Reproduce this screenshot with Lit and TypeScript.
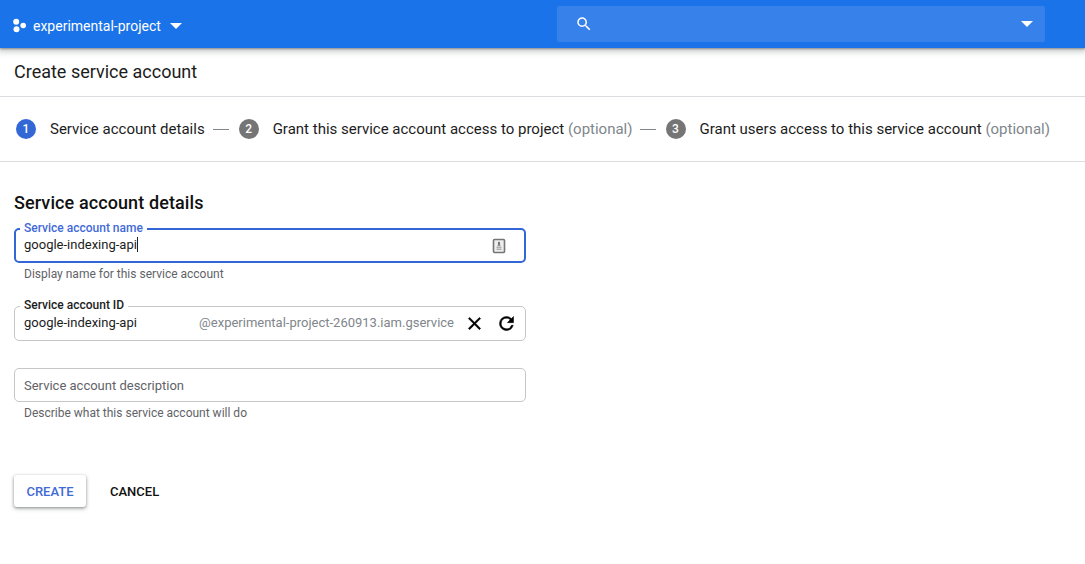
import { LitElement, html, css } from "lit";
import { customElement } from "lit/decorators.js";

@customElement("app-root")
export class AppRoot extends LitElement {
  static styles = css`
    :host { display: block; width: 1085px; height: 564px; background: #fff; overflow: hidden; font-family: Roboto, sans-serif; color: #202124; }
    .top { height: 48px; background: #1a73e8; display: flex; align-items: center; box-shadow: 0 1px 2px rgba(60,64,67,.5), 0 2px 6px 2px rgba(60,64,67,.25); position: relative; padding-left: 13px; box-sizing: border-box; }
    .proj { display: flex; align-items: center; width: 544px; color: #fff; font-size: 14px; padding-top: 4px; }
    .proj .logo { margin-top: -2px; }
    .proj .name { margin-left: 6px; }
    .caret { width: 0; height: 0; border-left: 6px solid transparent; border-right: 6px solid transparent; border-top: 6px solid #fff; }
    .proj .caret { margin-left: 9px; }
    .search { width: 488px; height: 36px; background: #3781ea; border-radius: 2px; display: flex; align-items: center; justify-content: space-between; padding: 0 12px 0 18px; box-sizing: border-box; }
    .title { padding: 0 14px 2px; box-sizing: border-box; border-bottom: 1px solid #dadce0; display: flex; align-items: center; font-size: 18px; height: 49px; color: #1c1c1c; }
    .stepper { height: 64px; border-bottom: 1px solid #dadce0; display: flex; align-items: center; padding-left: 16px; font-size: 15px; white-space: nowrap; }
    .num { width: 20px; height: 20px; border-radius: 50%; background: #757575; color: #fff; font-size: 12px; font-weight: 500; display: flex; align-items: center; justify-content: center; flex: none; }
    .num.on { background: #3367d6; }
    .lbl { margin-left: 14px; color: #1c1c1c; }
    .opt { color: #80868b; }
    .dash { width: 16px; height: 1px; background: #80868b; margin: 0 10px 0 8px; flex: none; }
    .dash.second { margin-left: 7px; }
    main { padding: 0 14px; width: 512px; }
    h2 { font-size: 18px; font-weight: 500; letter-spacing: .1px; margin: 30px 0 0; line-height: 22px; color: #111; }
    .field { position: relative; border: 1px solid #c6c6c6; border-radius: 5px; height: 35px; box-sizing: border-box; display: flex; align-items: center; padding: 0 8px 2px 9px; font-size: 13px; }
    .field.focus { border: 2px solid #3367d6; padding: 0 8px 2px 8px; }
    .f1 { margin-top: 14px; }
    .f2 { margin-top: 25px; }
    .f3 { margin-top: 27px; height: 34px; color: #5f6368; padding-bottom: 0; }
    .float { position: absolute; left: 5px; top: -9px; background: #fff; padding: 0 4px; font-size: 12px; line-height: 14px; font-weight: 500; color: #1c1c1c; }
    .focus .float { color: #3f6ad8; left: 4px; top: -9px; }
    .v { flex: 1; color: #1c1c1c; }
    .cursor { display: inline-block; width: 1px; height: 15px; background: #202124; vertical-align: -3px; }
    .suffix { color: #80868b; margin-right: 10px; }
    .icon { display: block; flex: none; }
    .person { margin-right: 9px; margin-top: 2px; }
    .x { margin-top: 2px; }
    .refresh { margin-left: 11px; margin-top: 2px; }
    .hint { font-size: 12px; line-height: 14px; color: #5f6368; margin: 3px 0 0 10px; }
    .f1 + .hint { margin-top: 4px; }
    .f3 + .hint { margin-top: 4px; }
    .actions { display: flex; align-items: center; margin-top: 55px; }
    .create { width: 72px; height: 32px; background: #fff; border-radius: 3px; box-shadow: 0 1px 3px rgba(60,64,67,.5), 0 2px 5px rgba(60,64,67,.2); color: #3f6ad8; font-size: 13px; font-weight: 500; display: flex; align-items: center; justify-content: center; }
    .cancel { margin-left: 24px; font-size: 13px; font-weight: 500; color: #111; }
  `;

  render() {
    return html`
      <div class="top">
        <div class="proj">
          <svg class="icon logo" width="14" height="15" viewBox="0 0 14 15" fill="#fff"><circle cx="3.2" cy="3.7" r="3"/><circle cx="10.2" cy="7.5" r="2.8"/><circle cx="3.5" cy="11.3" r="3"/></svg>
          <span class="name">experimental-project</span>
          <span class="caret"></span>
        </div>
        <div class="search">
          <svg class="icon" width="18" height="18" viewBox="0 0 24 24" fill="#fff"><path d="M15.5 14h-.79l-.28-.27A6.47 6.47 0 0 0 16 9.5 6.5 6.5 0 1 0 9.5 16c1.61 0 3.09-.59 4.23-1.57l.27.28v.79l5 4.99L20.49 19l-4.99-5zm-6 0C7.01 14 5 11.99 5 9.5S7.01 5 9.5 5 14 7.01 14 9.5 11.99 14 9.5 14z"/></svg>
          <span class="caret"></span>
        </div>
      </div>
      <div class="title">Create service account</div>
      <div class="stepper">
        <span class="num on">1</span><span class="lbl">Service account details</span><span class="dash"></span>
        <span class="num">2</span><span class="lbl">Grant this service account access to project <span class="opt">(optional)</span></span><span class="dash second"></span>
        <span class="num">3</span><span class="lbl">Grant users access to this service account <span class="opt">(optional)</span></span>
      </div>
      <main>
        <h2>Service account details</h2>
        <div class="field focus f1">
          <span class="float">Service account name</span>
          <span class="v">google-indexing-api<span class="cursor"></span></span>
          <svg class="icon person" width="16" height="16" viewBox="0 0 16 16"><rect x="2.5" y="1.5" width="11" height="13" rx="1" fill="#eee" stroke="#757575" stroke-width="1.6"/><circle cx="8" cy="5" r="1.2" fill="#757575"/><path d="M8 4.5l1.6 3.2H6.4z" fill="#757575"/><rect x="5.5" y="8.6" width="5" height="1.2" fill="#9e9e9e"/><rect x="5.5" y="10.6" width="5" height="1.2" fill="#9e9e9e"/></svg>
        </div>
        <div class="hint">Display name for this service account</div>
        <div class="field f2">
          <span class="float">Service account ID</span>
          <span class="v">google-indexing-api</span>
          <span class="suffix">@experimental-project-260913.iam.gservice</span>
          <svg class="icon x" width="21" height="21" viewBox="0 0 24 24" fill="#000" stroke="#000" stroke-width=".6"><path d="M19 6.41 17.59 5 12 10.59 6.41 5 5 6.41 10.59 12 5 17.59 6.41 19 12 13.41 17.59 19 19 17.59 13.41 12z"/></svg>
          <svg class="icon refresh" width="21" height="21" viewBox="0 0 24 24" fill="#000" stroke="#000" stroke-width=".6"><path d="M17.65 6.35A7.96 7.96 0 0 0 12 4a8 8 0 1 0 7.73 10h-2.08A6 6 0 1 1 12 6c1.66 0 3.14.69 4.22 1.78L13 11h7V4l-2.35 2.35z"/></svg>
        </div>
        <div class="field f3">Service account description</div>
        <div class="hint">Describe what this service account will do</div>
        <div class="actions">
          <div class="create">CREATE</div>
          <div class="cancel">CANCEL</div>
        </div>
      </main>
    `;
  }
}
